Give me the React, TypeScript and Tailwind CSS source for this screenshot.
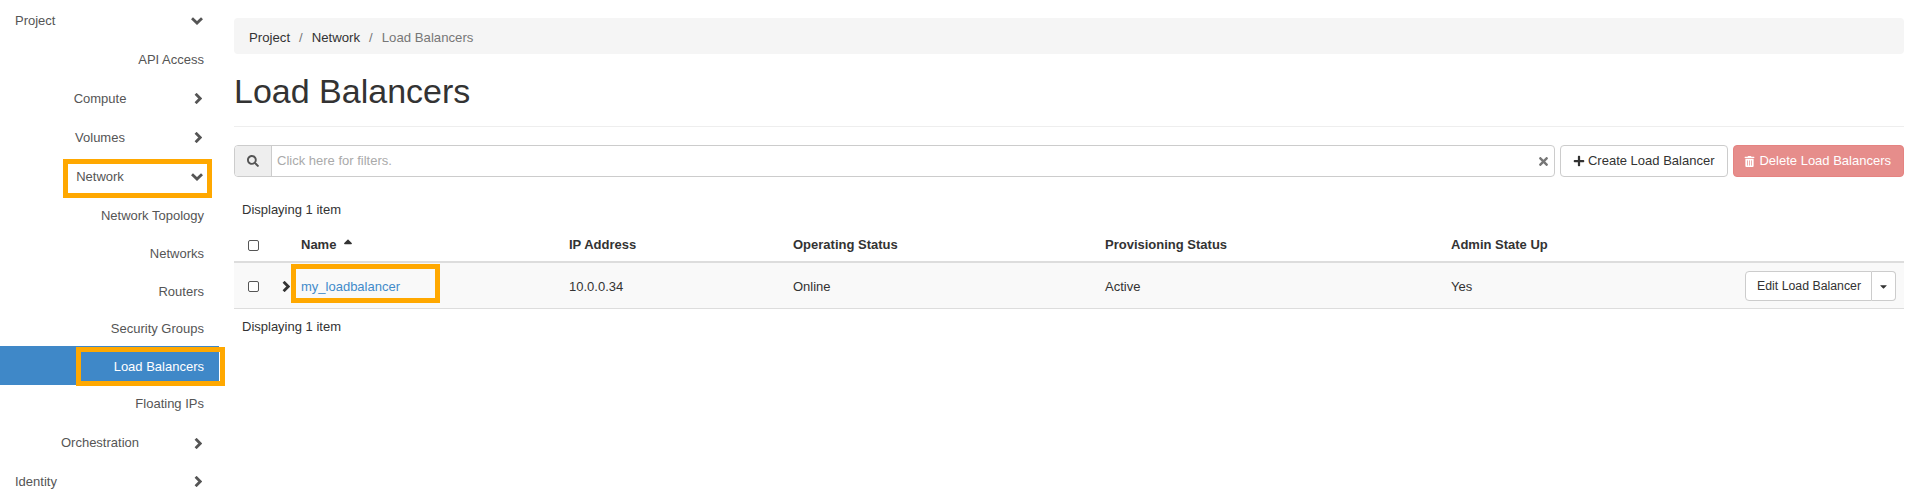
import { FaCaretDown, FaPlus, FaSearch, FaSortUp, FaTimes, FaTrashAlt } from "react-icons/fa";

type NavItem = {
  label: string;
  height: string;
  level: 0 | 1 | 2;
  open?: boolean;
  active?: boolean;
};

const NAV: NavItem[] = [
  { label: "Project", height: "h-[41px]", level: 0, open: true },
  { label: "API Access", height: "h-[38px]", level: 2 },
  { label: "Compute", height: "h-[39px]", level: 1 },
  { label: "Volumes", height: "h-[39px]", level: 1 },
  { label: "Network", height: "h-[40px]", level: 1, open: true },
  { label: "Network Topology", height: "h-[38px]", level: 2 },
  { label: "Networks", height: "h-[38px]", level: 2 },
  { label: "Routers", height: "h-[37px]", level: 2 },
  { label: "Security Groups", height: "h-[36px] pt-[2px]", level: 2 },
  { label: "Load Balancers", height: "h-[39px] pt-[2px]", level: 2, active: true },
  { label: "Floating IPs", height: "h-[37px]", level: 2 },
  { label: "Orchestration", height: "h-[40px] pt-[2px]", level: 1 },
  { label: "Identity", height: "h-[39px]", level: 0 },
];

function ChevronDown() {
  return (
    <svg width="12" height="8" viewBox="0 0 12 8" fill="none" stroke="#555" strokeWidth="2.8">
      <path d="M1 1.2 L6 6 L11 1.2" />
    </svg>
  );
}

function ChevronRight({ color = "#555" }: { color?: string }) {
  return (
    <svg width="8" height="11" viewBox="0 0 8 11" fill="none" stroke={color} strokeWidth="2.8">
      <path d="M1.6 0.8 L6.2 5.5 L1.6 10.2" />
    </svg>
  );
}

function Marker({ className }: { className: string }) {
  return <div className={`absolute border-[5px] border-[#ffa800] pointer-events-none ${className}`} />;
}

function SideRow({ item }: { item: NavItem }) {
  return (
    <div
      className={`flex items-center pr-[15px] ${item.height} ${
        item.active ? "bg-[#3f88c8] text-white" : "text-[#555]"
      }`}
    >
      {item.level === 0 && <span className="pl-[15px]">{item.label}</span>}
      {item.level === 1 && <span className="w-[154px] text-center pl-[46px]">{item.label}</span>}
      {item.level === 2 && <span className="ml-auto">{item.label}</span>}
      {item.level !== 2 && (
        <span className={`ml-auto flex items-center ${item.open ? "mr-[1px]" : "mr-[2px]"}`}>
          {item.open ? <ChevronDown /> : <ChevronRight />}
        </span>
      )}
    </div>
  );
}

function Sidebar() {
  return (
    <nav className="w-[219px] shrink-0 h-[501px] overflow-hidden relative">
      {NAV.map((item) => (
        <SideRow key={item.label} item={item} />
      ))}
      <Marker className="left-[63px] top-[159px] w-[149px] h-[39px]" />
    </nav>
  );
}

function Toolbar() {
  return (
    <div className="flex gap-[5px] mt-[18px] h-[32px]">
      <div className="flex flex-1 border border-[#ccc] rounded-[4px] overflow-hidden">
        <div className="w-[37px] bg-[#eee] border-r border-[#ccc] flex items-center justify-center text-[#555]">
          <FaSearch className="text-[12px]" />
        </div>
        <div className="flex-1 flex items-center pl-[5px] text-[#aaa]">Click here for filters.</div>
        <div className="flex items-center pr-[4px] text-[#777]">
          <FaTimes className="text-[13px]" />
        </div>
      </div>
      <button className="flex items-center gap-[3px] border border-[#ccc] rounded-[4px] pl-[12px] pr-[13px] text-[#333]">
        <FaPlus className="text-[12px]" />
        Create Load Balancer
      </button>
      <button className="flex items-center gap-[4px] bg-[#e68d8b] border border-[#e58381] rounded-[4px] pl-[10px] pr-[12px] text-white">
        <FaTrashAlt className="text-[11px]" />
        Delete Load Balancers
      </button>
    </div>
  );
}

function Checkbox() {
  return <div className="w-[11px] h-[11px] border border-[#555] rounded-[2px] bg-white" />;
}

function Table() {
  return (
    <table className="w-full table-fixed border-collapse text-[#333]">
      <colgroup>
        <col className="w-[40px]" />
        <col className="w-[19px]" />
        <col className="w-[268px]" />
        <col className="w-[224px]" />
        <col className="w-[312px]" />
        <col className="w-[346px]" />
        <col />
      </colgroup>
      <thead>
        <tr className="h-[35px] border-b-2 border-[#ddd] text-left font-bold [&>th]:pt-[2px]">
          <th className="pl-[14px]">
            <Checkbox />
          </th>
          <th />
          <th className="px-[8px]">
            <span className="inline-flex items-center gap-[5px]">
              Name
              <FaSortUp className="text-[14px]" />
            </span>
          </th>
          <th className="px-[8px]">IP Address</th>
          <th className="px-[8px]">Operating Status</th>
          <th className="px-[8px]">Provisioning Status</th>
          <th className="px-[8px]">Admin State Up</th>
          <th />
        </tr>
      </thead>
      <tbody>
        <tr className="h-[46px] bg-[#f9f9f9] border-b border-[#ddd] [&>td]:pt-[2px]">
          <td className="pl-[14px]">
            <Checkbox />
          </td>
          <td className="pl-[8px]">
            <ChevronRight color="#333" />
          </td>
          <td className="px-[8px] text-[#428bca]">my_loadbalancer</td>
          <td className="px-[8px]">10.0.0.34</td>
          <td className="px-[8px]">Online</td>
          <td className="px-[8px]">Active</td>
          <td className="px-[8px]">Yes</td>
          <td className="pr-[8px]">
            <div className="flex justify-end text-[12.3px]">
              <button className="h-[30px] pl-[11px] pr-[10px] bg-white border border-[#ccc] rounded-l-[4px]">
                Edit Load Balancer
              </button>
              <button className="h-[30px] w-[24px] bg-white border border-l-0 border-[#ccc] rounded-r-[4px] flex items-center justify-center">
                <FaCaretDown className="text-[11px]" />
              </button>
            </div>
          </td>
        </tr>
      </tbody>
    </table>
  );
}

export default function App() {
  return (
    <div className="relative flex h-[501px] w-[1916px] overflow-hidden bg-white text-[13px] font-['Liberation_Sans',Arial,sans-serif]">
      <Sidebar />
      <main className="flex-1 pl-[15px] pr-[12px] pt-[18px]">
        <div className="flex items-center gap-[9px] h-[36px] pt-[3px] bg-[#f5f5f5] rounded-[4px] px-[15px] text-[13.2px] text-[#333]">
          <span>Project</span>
          <span className="text-[#777]">/</span>
          <span>Network</span>
          <span className="text-[#777]">/</span>
          <span className="text-[#777]">Load Balancers</span>
        </div>
        <h1 className="h-[73px] flex items-center pt-[1px] text-[34px] leading-none text-[#333] border-b border-[#eee]">
          Load Balancers
        </h1>
        <Toolbar />
        <div className="h-[22px] mt-[22px] px-[8px] flex items-center text-[#333]">Displaying 1 item</div>
        <div className="mt-[6px]">
          <Table />
        </div>
        <div className="h-[36px] px-[8px] flex items-center text-[#333]">Displaying 1 item</div>
      </main>
      <Marker className="left-[76px] top-[347px] w-[149px] h-[39px]" />
      <Marker className="left-[291px] top-[264px] w-[149px] h-[39px]" />
    </div>
  );
}
